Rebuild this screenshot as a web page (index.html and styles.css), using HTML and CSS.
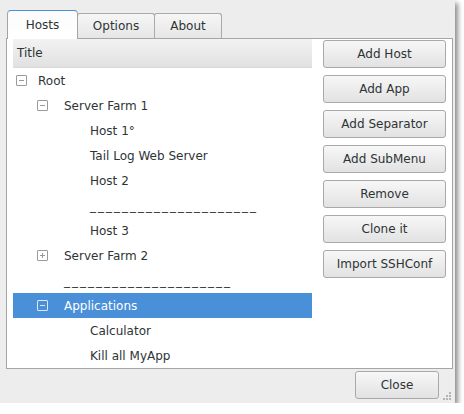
FILE: index.html
```html
<!DOCTYPE html>
<html>
<head>
<meta charset="utf-8">
<link rel="stylesheet" href="styles.css">
</head>
<body>
<div class="window">
  <div class="tabs">
    <div class="tab active">Hosts</div>
    <div class="tab t-options">Options</div>
    <div class="tab t-about">About</div>
  </div>
  <div class="notebook">
    <div class="tree">
      <div class="header">Title</div>
      <div class="row l0"><span class="exp e0 minus"></span><span class="label">Root</span></div>
      <div class="row l1"><span class="exp e1 minus"></span><span class="label">Server Farm 1</span></div>
      <div class="row l2"><span class="exp"></span><span class="label">Host 1°</span></div>
      <div class="row l2"><span class="exp"></span><span class="label">Tail Log Web Server</span></div>
      <div class="row l2"><span class="exp"></span><span class="label">Host 2</span></div>
      <div class="row l2"><span class="exp"></span><span class="label dash">_____________________</span></div>
      <div class="row l2"><span class="exp"></span><span class="label">Host 3</span></div>
      <div class="row l1"><span class="exp e1 plus"></span><span class="label">Server Farm 2</span></div>
      <div class="row l1"><span class="exp"></span><span class="label dash">_____________________</span></div>
      <div class="row l1 selected"><span class="exp e1 minus"></span><span class="label">Applications</span></div>
      <div class="row l2"><span class="exp"></span><span class="label">Calculator</span></div>
      <div class="row l2"><span class="exp"></span><span class="label">Kill all MyApp</span></div>
    </div>
    <div class="buttons">
      <div class="btn">Add Host</div>
      <div class="btn">Add App</div>
      <div class="btn">Add Separator</div>
      <div class="btn">Add SubMenu</div>
      <div class="btn">Remove</div>
      <div class="btn">Clone it</div>
      <div class="btn">Import SSHConf</div>
    </div>
  </div>
  <div class="footer">
    <div class="btn close">Close</div>
    <svg class="grip" width="10" height="10" viewBox="0 0 10 10">
      <g fill="#b4b4b4">
        <rect x="7" y="0" width="2" height="2"/>
        <rect x="4" y="3" width="2" height="2"/><rect x="7" y="3" width="2" height="2"/>
        <rect x="1" y="6" width="2" height="2"/><rect x="4" y="6" width="2" height="2"/><rect x="7" y="6" width="2" height="2"/>
      </g>
    </svg>
  </div>
</div>
</body>
</html>
```

FILE: styles.css
```css
html, body {
  margin: 0;
  padding: 0;
  background: #ffffff;
}
body {
  font-family: "DejaVu Sans", "Open Sans", sans-serif;
  font-size: 12px;
  color: #2e3436;
}
.window {
  width: 455px;
  height: 403px;
  background: #ededed;
  box-shadow: 3px 3px 5px rgba(0, 0, 0, 0.45);
  display: flex;
  flex-direction: column;
}
.tabs {
  display: flex;
  align-items: flex-end;
  height: 38px;
  padding-left: 7px;
  box-sizing: border-box;
}
.tab {
  height: 25px;
  box-sizing: border-box;
  border: 1px solid #aaaaaa;
  border-bottom: none;
  border-radius: 3px 3px 0 0;
  background: linear-gradient(#f6f6f6, #e6e6e6);
  display: flex;
  align-items: center;
  justify-content: center;
  margin-left: -1px;
}
.tab.active {
  width: 71px;
  height: 29px;
  margin-left: 0;
  margin-bottom: -1px;
  border-color: #a4a4a4;
  border-top: 1px solid #4a90d9;
  border-radius: 4px 4px 0 0;
  background: linear-gradient(#fbfbfb, #ffffff);
  position: relative;
  z-index: 1;
}
.t-options { width: 78px; }
.t-about { width: 68px; }
.notebook {
  margin: 0 2px 0 6px;
  height: 331px;
  box-sizing: border-box;
  border: 1px solid #a6a6a6;
  background: #ffffff;
  display: flex;
  padding-left: 6px;
}
.tree {
  width: 299px;
  flex: none;
}
.header {
  height: 29px;
  background: linear-gradient(#f2f2f2, #e1e1e1);
  border-bottom: 1px solid #d8d8d8;
  box-sizing: border-box;
  padding-left: 4px;
  display: flex;
  align-items: center;
}
.row {
  height: 25px;
  display: flex;
  align-items: center;
}
.l0 { padding-left: 0; }
.l1 { padding-left: 26px; }
.l2 { padding-left: 52px; }
.exp {
  width: 25px;
  height: 25px;
  flex: none;
  display: flex;
  align-items: center;
}
.exp.e0::before, .exp.e1::before {
  content: "";
  width: 9px;
  height: 9px;
  border: 1px solid #9a9a9a;
  border-radius: 1px;
  background: linear-gradient(#9a9a9a, #9a9a9a) center / 5px 1px no-repeat;
}
.exp.e0::before { margin-left: 3px; }
.exp.e1::before { margin-left: -2px; }
.exp.plus::before {
  background:
    linear-gradient(#9a9a9a, #9a9a9a) center / 5px 1px no-repeat,
    linear-gradient(#9a9a9a, #9a9a9a) center / 1px 5px no-repeat;
}
.label {
  white-space: nowrap;
}
.dash {
  letter-spacing: 2px;
}
.selected {
  background: #4a90d9;
  color: #ffffff;
}
.selected .exp::before {
  border-color: #dbe8f6;
  background: linear-gradient(#dbe8f6, #dbe8f6) center / 5px 1px no-repeat;
}
.buttons {
  margin-left: 11px;
  padding-top: 1px;
  display: flex;
  flex-direction: column;
  gap: 7px;
}
.btn {
  width: 123px;
  height: 28px;
  box-sizing: border-box;
  border: 1px solid #a9a9a9;
  border-radius: 3px;
  background: linear-gradient(#f7f7f7, #e2e2e2);
  display: flex;
  align-items: center;
  justify-content: center;
  color: #2e3436;
}
.footer {
  flex: 1;
  display: flex;
  justify-content: flex-end;
  padding-top: 2px;
  padding-right: 3px;
  position: relative;
}
.btn.close {
  width: 84px;
  margin-right: 13px;
}
.grip {
  position: absolute;
  right: 3px;
  bottom: 1px;
}
```
